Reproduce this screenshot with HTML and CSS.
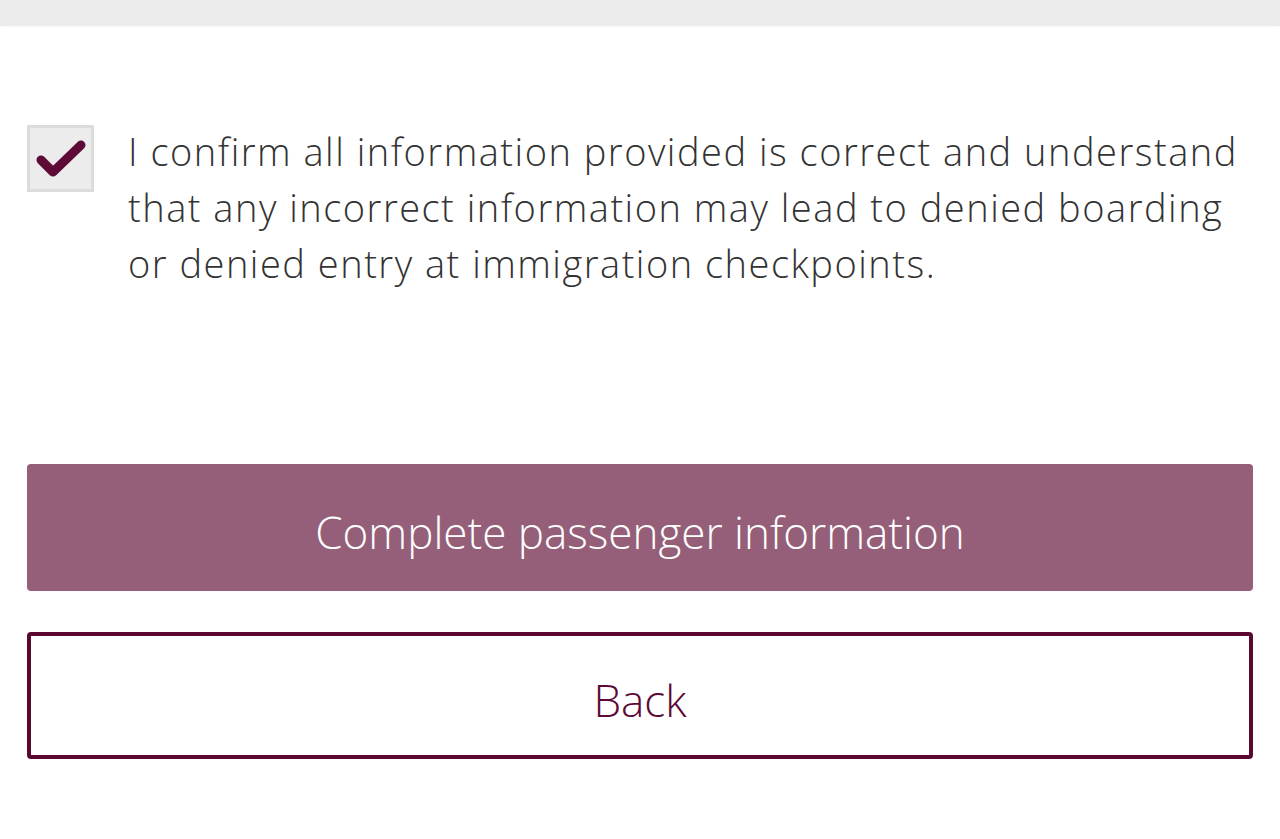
FILE: index.html
```html
<!DOCTYPE html>
<html>
<head>
<meta charset="utf-8">
<link rel="stylesheet" href="styles.css">
</head>
<body>
<div class="topbar"></div>
<main class="content">
  <label class="confirm">
    <span class="checkbox">
      <svg viewBox="0 0 52 42" width="52" height="42"><path d="M6 22 L18 34 L46 7" fill="none" stroke="#5e0a37" stroke-width="9" stroke-linecap="round" stroke-linejoin="round"/></svg>
    </span>
    <span class="confirm-text">I confirm all information provided is correct and understand that any incorrect information may lead to denied boarding or denied entry at immigration checkpoints.</span>
  </label>
  <div class="actions">
    <button class="btn btn-primary">Complete passenger information</button>
    <button class="btn btn-secondary">Back</button>
  </div>
</main>
</body>
</html>
```
FILE: styles.css
```css
* { box-sizing: border-box; }
html, body { margin: 0; padding: 0; background: #fff; }
body { font-family: "Open Sans", "Lato", sans-serif; font-weight: 300; color: #333; }
.topbar { height: 26px; background: #ececec; box-shadow: 0 1px 3px rgba(0,0,0,0.04); }
.content { padding: 0 27px; }
.confirm { display: flex; align-items: flex-start; gap: 34px; margin-top: 99px; }
.checkbox { flex: 0 0 67px; width: 67px; height: 67px; border: 3px solid #dcdcdc; background: #ececec; display: flex; align-items: center; justify-content: center; }
.confirm-text { font-size: 38px; line-height: 56px; letter-spacing: 1.5px; color: #333; margin-top: -2px; }
.actions { display: flex; flex-direction: column; gap: 41px; margin-top: 173px; }
.btn { width: 100%; height: 127px; border-radius: 4px; font-family: inherit; font-weight: 300; font-size: 44px; padding-top: 10px; cursor: pointer; }
.btn-primary { background: #955f79; color: #fff; border: none; }
.btn-secondary { background: #fff; color: #5c0a35; border: 4px solid #5c0632; }
```
